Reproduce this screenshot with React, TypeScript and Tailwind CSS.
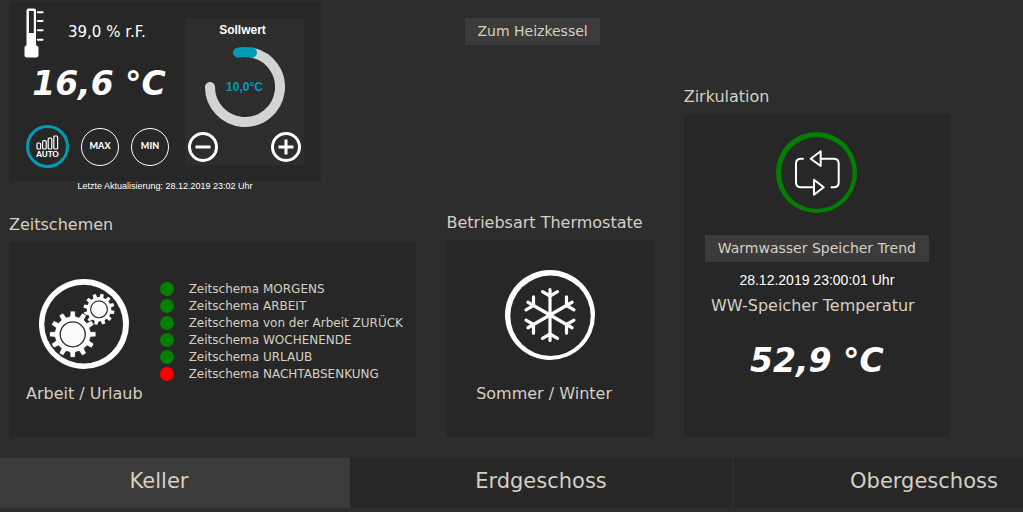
import React from 'react';

type Point = [number, number];

const SCHEMES = [
  { name: 'Zeitschema MORGENS', active: true },
  { name: 'Zeitschema ARBEIT', active: true },
  { name: 'Zeitschema von der Arbeit ZURÜCK', active: true },
  { name: 'Zeitschema WOCHENENDE', active: true },
  { name: 'Zeitschema URLAUB', active: true },
  { name: 'Zeitschema NACHTABSENKUNG', active: false },
];

const FLOORS = ['Keller', 'Erdgeschoss', 'Obergeschoss'];

// closed outline of a gear wheel with trapezoid teeth
function gearPath(cx: number, cy: number, outer: number, root: number, teeth: number, turn = 0) {
  const step = 360 / teeth;
  const points: Point[] = [];
  for (let i = 0; i < teeth; i++) {
    const mid = i * step + turn - 90;
    const corners: Point[] = [
      [mid - step * 0.3, root],
      [mid - step * 0.2, outer],
      [mid + step * 0.2, outer],
      [mid + step * 0.3, root],
    ];
    corners.forEach(([deg, r]) => {
      const a = (deg * Math.PI) / 180;
      points.push([cx + r * Math.cos(a), cy + r * Math.sin(a)]);
    });
  }
  return 'M' + points.map(([x, y]) => `${x.toFixed(2)} ${y.toFixed(2)}`).join('L') + 'Z';
}

const Thermometer = () => (
  <svg width="20" height="50" viewBox="0 0 20 50" aria-hidden="true">
    <path
      d="M2.5 2.5Q2.5 .5 4.5 .5H10Q12 .5 12 2.5V37L14.5 39V47Q14.5 49.5 12 49.5H3Q.5 49.5 .5 47V39L2.5 37Z"
      fill="#fff"
    />
    <rect x="4.9" y="3" width="4.9" height="22" fill="#272727" />
    <path d="M13.8 4.3H18.6M13.8 13H18.6M13.8 22.3H18.6M13.8 31.7H18.6" stroke="#fff" strokeWidth="2" strokeLinecap="round" />
  </svg>
);

const GearsIcon = () => (
  <svg width="90" height="90" viewBox="0 0 90 90" aria-hidden="true">
    <circle cx="45" cy="45" r="45" fill="#fff" />
    <circle cx="44.7" cy="45.2" r="39.4" fill="#272727" />
    <path d={gearPath(60, 30.3, 15.6, 12.2, 12, 12)} fill="#fff" />
    <circle cx="60" cy="30.3" r="8.4" fill="#fcfafa" stroke="#272727" strokeWidth="1.1" />
    <path d={gearPath(33.7, 55.3, 23.4, 18.2, 12)} fill="#fff" stroke="#272727" strokeWidth=".8" />
    <circle cx="33.7" cy="55.3" r="12.5" fill="#fcfafa" stroke="#272727" strokeWidth="1.3" />
  </svg>
);

const SnowflakeIcon = () => (
  <svg width="90" height="90" viewBox="0 0 90 90" aria-hidden="true">
    <circle cx="45" cy="45" r="45" fill="#fff" />
    <circle cx="45.5" cy="45.8" r="40.2" fill="#272727" />
    <g stroke="#fff" strokeWidth="3.2" strokeLinecap="round" strokeLinejoin="round" fill="none">
      {[0, 60, 120, 180, 240, 300].map((deg) => (
        <path key={deg} d="M45 45V19.5M37.5 21.6L45 26L52.5 21.6" transform={`rotate(${deg} 45 45)`} />
      ))}
    </g>
  </svg>
);

const CirculationIcon = () => (
  <svg width="81" height="81" viewBox="0 0 81 81" aria-hidden="true">
    <circle cx="40.5" cy="40.5" r="40.5" fill="#008000" />
    <circle cx="40.8" cy="41" r="35.9" fill="#272727" />
    <g stroke="#fff" strokeWidth="2" strokeLinecap="round" strokeLinejoin="round" fill="none">
      <path d="M27 26.7H25Q20 26.7 20 31.5V50.5Q20 55.3 25 55.3H38" />
      <path d="M38 47.7L47.7 55.3L38 62.7Z" />
      <path d="M44.7 19.3L34.7 26.7L44.7 34Z" />
      <path d="M44.7 26.7H57.7Q62.7 26.7 62.7 31.5V50.5Q62.7 55.3 57.7 55.3H55.5" />
    </g>
  </svg>
);

const Gauge = () => (
  <div className="relative size-20">
    <svg className="size-20" viewBox="0 0 80 80" fill="none" strokeWidth="10" strokeLinecap="round" aria-hidden="true">
      <path d="M5 40A35 35 0 1 0 47 5.7" stroke="#d3d3d3" />
      <path d="M33 5.7A35 35 0 0 1 47 5.7" stroke="#009bb4" />
    </svg>
    <span className="absolute inset-0 flex items-center justify-center text-[12px] font-bold text-[#009bb4]">
      10,0°C
    </span>
  </div>
);

const StepButton: React.FC<{ label: string; d: string }> = ({ label, d }) => (
  <button type="button" aria-label={label} className="size-[30px]">
    <svg width="30" height="30" viewBox="0 0 30 30" fill="none" stroke="#fff" strokeWidth="3" aria-hidden="true">
      <circle cx="15" cy="15" r="13.5" />
      <path d={d} />
    </svg>
  </button>
);

const Temperature: React.FC<{ value: string }> = ({ value }) => (
  <p className="text-center text-[33px] leading-10 font-bold text-white italic">{value} °C</p>
);

const RoomCard = () => (
  <section className="flex items-start bg-[#272727]">
    <div className="flex-1 pt-[7px] pb-[13px]">
      <div className="flex pl-[15px]">
        <Thermometer />
        <span className="ml-6 pt-[14px] text-[15px] leading-5 text-white">39,0 % r.F.</span>
      </div>
      <div className="mt-[6px] pl-1">
        <Temperature value="16,6" />
      </div>
      <div className="mt-[21px] flex items-center gap-3 pl-[17px] font-['Lato',sans-serif] text-[9px] leading-none font-black text-white">
        <button
          type="button"
          className="flex size-[43px] flex-col items-center justify-center rounded-full border-[3px] border-[#009bb4]"
        >
          <svg width="23" height="15" viewBox="0 0 23 15" fill="none" stroke="#fff" strokeWidth="1.2" aria-hidden="true">
            <rect x="1" y="8" width="3.6" height="6" rx="1" />
            <rect x="6.6" y="5.6" width="3.6" height="8.4" rx="1" />
            <rect x="12.2" y="3.2" width="3.6" height="10.8" rx="1" />
            <rect x="17.8" y="1" width="3.8" height="13" rx="1" />
          </svg>
          <span className="text-[8px]">AUTO</span>
        </button>
        <button type="button" className="size-[38px] rounded-full border border-white pb-[2px]">
          MAX
        </button>
        <button type="button" className="size-[38px] rounded-full border border-white pb-[2px]">
          MIN
        </button>
      </div>
    </div>
    <div className="mt-[17px] mr-[17px] flex w-[119px] flex-col items-center bg-[#2d2d2d] px-[3px] pb-[3px] font-['Liberation_Sans',sans-serif]">
      <h3 className="pt-1 pr-1 pb-[9px] text-[12px] leading-4 font-bold text-white">Sollwert</h3>
      <Gauge />
      <div className="mt-[5px] flex w-full justify-between">
        <StepButton label="Sollwert senken" d="M7.5 15H22.5" />
        <StepButton label="Sollwert erhöhen" d="M7.5 15H22.5M15 7.5V22.5" />
      </div>
    </div>
  </section>
);

const ScheduleCard = () => (
  <section>
    <h2 className="text-[16px] leading-5">Zeitschemen</h2>
    <div className="mt-[7px] flex bg-[#272727] pt-[37px] pb-[33px]">
      <button type="button" className="ml-[17px] flex flex-col items-center gap-[15px] text-[16px] leading-5">
        <GearsIcon />
        Arbeit / Urlaub
      </button>
      <ul className="ml-[17px] pt-px text-[12px]">
        {SCHEMES.map(({ name, active }) => (
          <li key={name} className="flex h-[17px] items-center gap-[15px] whitespace-nowrap">
            <span className={active ? 'size-[14px] rounded-full bg-[#008000]' : 'size-[14px] rounded-full bg-[#ff0000]'} />
            {name}
          </li>
        ))}
      </ul>
    </div>
  </section>
);

const ModeCard = () => (
  <section>
    <h2 className="text-[16px] leading-5 whitespace-nowrap">Betriebsart Thermostate</h2>
    <div className="mt-[7px] bg-[#272727] pt-[30px] pb-[33px]">
      <button type="button" className="mx-auto flex flex-col items-center gap-6 text-[16px] leading-5">
        <SnowflakeIcon />
        <span className="pr-3">Sommer / Winter</span>
      </button>
    </div>
  </section>
);

const CirculationCard = () => (
  <section>
    <h2 className="text-[16px] leading-5">Zirkulation</h2>
    <div className="mt-[7px] flex flex-col items-center bg-[#272727] pt-[18px] pb-14">
      <button type="button" aria-label="Zirkulation schalten">
        <CirculationIcon />
      </button>
      <a href="#trend" className="mt-[22px] bg-[#3b3b3b] px-[13px] text-[14px] leading-[27px]">
        Warmwasser Speicher Trend
      </a>
      <p className="mt-2 font-['Liberation_Sans',sans-serif] text-[14px] leading-5 text-white">28.12.2019 23:00:01 Uhr</p>
      <p className="mt-[6px] mb-[25px] pr-2 text-[16px] leading-5">WW-Speicher Temperatur</p>
      <Temperature value="52,9" />
    </div>
  </section>
);

export default function App() {
  return (
    <div className="min-h-screen overflow-hidden bg-[#2d2d2d] font-['DejaVu_Sans',sans-serif] text-[#d6cfc4]">
      <main className="grid grid-cols-[407fr_207fr_266fr] gap-[30px] pt-px pr-[73px] pb-[21px] pl-[9px]">
        <div className="flex flex-col justify-between gap-6">
          <div className="w-[312px]">
            <RoomCard />
            <p className="text-center font-['Liberation_Sans',sans-serif] text-[9px] leading-[10px] text-white">
              Letzte Aktualisierung: 28.12.2019 23:02 Uhr
            </p>
          </div>
          <ScheduleCard />
        </div>
        <div className="flex flex-col justify-between pt-[17px]">
          <a href="#heizkessel" className="ml-[19px] self-start bg-[#3b3b3b] px-3 text-[14px] leading-[27px]">
            Zum Heizkessel
          </a>
          <ModeCard />
        </div>
        <div className="flex flex-col justify-end">
          <CirculationCard />
        </div>
      </main>
      <nav className="-ml-8 flex text-[21px] leading-[46px]">
        {FLOORS.map((floor, i) => (
          <button
            key={floor}
            type="button"
            className={
              i === 0
                ? 'w-[382px] shrink-0 bg-[#3b3b3b] pb-1'
                : 'w-[382px] shrink-0 bg-[#272727] pb-1 last:border-l-2 last:border-[#2d2d2d]'
            }
          >
            {floor}
          </button>
        ))}
      </nav>
    </div>
  );
}
